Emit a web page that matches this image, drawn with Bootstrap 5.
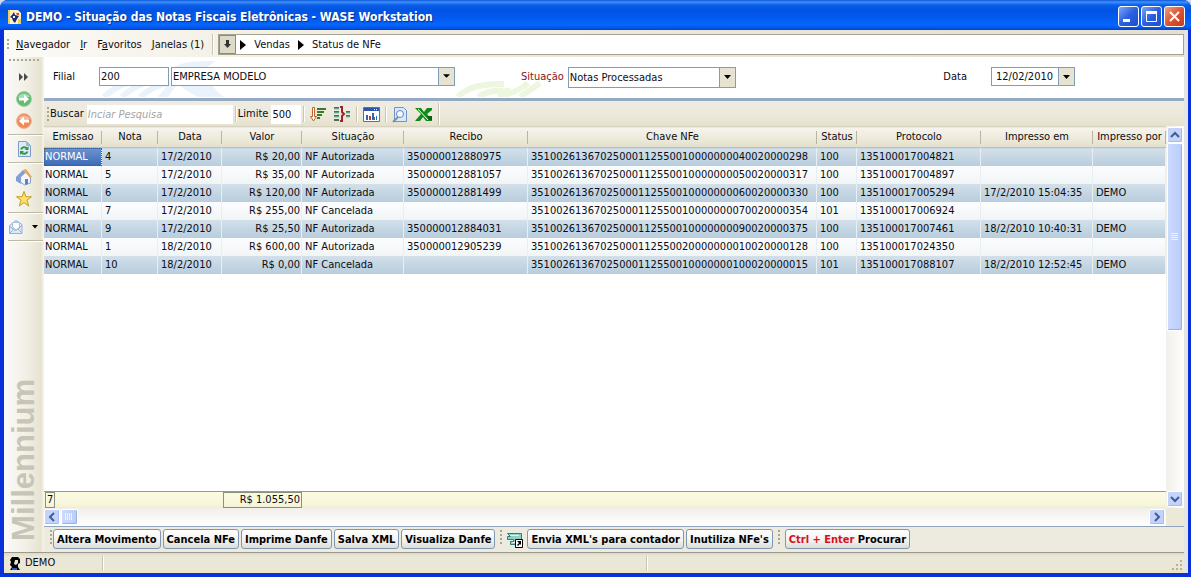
<!DOCTYPE html>
<html lang="pt-BR">
<head>
<meta charset="utf-8">
<meta name="viewport" content="width=device-width, initial-scale=1">
<title>DEMO - Situação das Notas Fiscais Eletrônicas - WASE Workstation</title>
<link href="https://cdn.jsdelivr.net/npm/bootstrap@5.3.0/dist/css/bootstrap.min.css" rel="stylesheet">
<style>
  :root { --tan: #ece9d8; --line: #7f9db9; --ink: #0c0c14; }
  body { font: 11px/14px "DejaVu Sans Condensed", "Noto Sans", sans-serif; color: var(--ink); background: #ccd9ee; }
  a { color: inherit; text-decoration: none; }
  button, input, select { font: inherit; color: inherit; }
  svg { display: block; flex: none; }
  .gap-2px { gap: 2px; }
  .fit { min-width: 0; }

  /* window frame */
  .win { border-radius: 8px 8px 0 0; background: #0831d9; overflow: hidden; }
  .titlebar { height: 30px; padding: 3px 6px 0 8px; background: linear-gradient(#0a54d8 0, #3f92fb 2px, #0b5fe8 5px, #0054e3 10px, #0459ef 18px, #0566fe 25px, #0355e8 28px, #0340c8 30px); }
  .titlebar h1 { font-size: 12px; line-height: 16px; font-weight: 700; color: #fff; text-shadow: 1px 1px 1px #0a2f8c; padding-left: 5px; }
  .cap { width: 21px; height: 21px; padding: 0; border: 1px solid #fff; border-radius: 3px; background: linear-gradient(135deg, #7fa5f8, #2a5fe0 50%, #1c4fd0); }
  .cap svg { width: 19px; height: 19px; }
  .cap-close { background: linear-gradient(135deg, #f0a088, #dd5433 50%, #c63a1a); }
  .inner { margin: 0 3px 4px 4px; background: var(--tan); border-right: 4px solid #e3e5e4; }

  /* menu and address */
  .menubar { height: 27px; padding: 4px 0 2px 2px; background: linear-gradient(90deg, #fbfaf5, #efecdf 30%, #e4e0cf); }
  .grip { width: 4px; background: radial-gradient(circle at 2px 2px, #a8a595 1px, transparent 1px) 0 0 / 4px 4px; }
  .grip-top { height: 4px; background: radial-gradient(circle at 2px 2px, #aaa797 1px, transparent 1px) 0 0 / 4px 4px; }
  .menubar nav { gap: 10px; padding-left: 6px; }
  .vline { width: 2px; border-left: 1px solid #c9c5b2; border-right: 1px solid #fff; }
  .path { height: 21px; border: 1px solid #a5a294; background: #fff; }
  .path button { width: 17px; height: 19px; padding: 0; border: 1px solid #8f8b78; background: #dfdac6; }

  /* side bar */
  .side { width: 40px; padding-top: 1px; background: linear-gradient(90deg, #fafafa, #f1efe4 60%, #e7e3d1 95%, #f4f1e6); border-right: 1px solid #f4f1e6; box-sizing: content-box; }
  .side button { height: 22px; padding: 0; border: 0; background: none; }
  .side .rule { height: 2px; margin: 2px 0 2px 4px; border-top: 1px solid #bdb9a6; border-bottom: 1px solid #fff; }
  .brand { writing-mode: vertical-rl; transform: rotate(180deg); font: 700 31px/31px "Liberation Sans", Arial, sans-serif; color: #c8c4b6; padding-top: 11px; }

  /* filters */
  .filters { height: 44px; background: #fff; border-bottom: 3px solid #96a9c2; padding: 10px 109px 0 9px; }
  .filters .art { position: absolute; left: 50px; top: 0; pointer-events: none; }
  .field { height: 19px; border: 1px solid var(--line); border-radius: 0; background: #fff; padding: 0 1px; outline: 0; }
  .combo { appearance: none; padding-right: 18px; background: #fff url("data:image/svg+xml,%3Csvg xmlns='http://www.w3.org/2000/svg' width='16' height='19'%3E%3Cpath fill='%23e6e3d2' d='M0 0h16v19H0z'/%3E%3Cpath fill='%237f9db9' d='M0 0h1v19H0z'/%3E%3Cpath d='M5 7h7L8.500 11z'/%3E%3C/svg%3E") right top / 16px 100% no-repeat; }
  .w-code { width: 70px; } .w-firm { width: 284px; } .w-status { width: 168px; } .w-date { width: 68px; }
  .tall { height: 21px; }
  .pick { width: 17px; height: 19px; padding: 0; margin-left: -1px; border: 1px solid var(--line); background: #e6e3d2; }
  .gap-firm { margin-left: 2px; } .gap-status { margin-left: 66px; }
  .lbl { line-height: 19px; } .lbl-red { color: #8b1010; }

  /* tool bar */
  .tools { height: 25px; padding: 2px 0 1px 2px; background: linear-gradient(#efece4, #ece8da 60%, #e6e1cc); }
  .tools input { height: 19px; border: 0; background: #fff; padding: 0 1px; outline: 0; }
  .tools input::placeholder { color: #a5a5a5; font-style: italic; opacity: 1; }
  .tools label { padding-right: 3px; }
  .w-find { width: 146px; } .w-limit { width: 30px; }
  .tools button { width: 24px; padding: 0; border: 0; background: none; }
  .tools .vline { margin: 0 1px 0 2px; }

  /* grid */
  .sheet { background: #fff; }
  .notes { table-layout: fixed; width: 100%; white-space: nowrap; border-collapse: collapse; }
  .notes th { height: 21px; padding: 0; font-weight: 400; text-align: center; border-bottom: 1px solid #c3bfae; border-top: 1px solid #d6d2c2;
    background: linear-gradient(#b9b5a4, #b9b5a4) right 4px / 1px 13px no-repeat, linear-gradient(#f6f4ec, #ece9da 60%, #e2decb); }
  .notes td { height: 18px; padding: 0 2px 0 3px; line-height: 17px; box-shadow: inset -1px 0 #e8eef2; }
  .notes td:first-child { padding-left: 1px; }
  .notes tr:nth-child(odd) td { background: linear-gradient(#d3e0ea, #c2d4e2 60%, #b9cddd); }
  .notes tr:nth-child(even) td { background: linear-gradient(#fbfcfd, #f2f5f6); }
  .notes tbody tr:first-child td:first-child { background: linear-gradient(#6b93cf, #3a68b4); color: #fff; outline: 1px dotted #6b5a20; outline-offset: -1px; }
  .c-em { width: 58px; } .c-no { width: 56px; } .c-da { width: 64px; } .c-va { width: 80px; } .c-si { width: 102px; } .c-re { width: 124px; }
  .c-st { width: 40px; } .c-pr { width: 124px; } .c-ie { width: 112px; } .c-ip { width: 73px; }
  .totals { height: 17px; padding-left: 1px; border-top: 1px solid #9a9a8a; background: linear-gradient(#fbfbe4, #f8f6d8 80%, #eeebd6); }
  .totals output { border: 1px solid #8f8f80; line-height: 14px; padding: 0 1px; }
  .t-count { width: 10px; } .t-sum { width: 79px; margin-left: 168px; text-align: right; }

  /* scroll bars */
  .vbar { width: 18px; padding: 1px 1px 1px 1px; background: linear-gradient(90deg, #f1f0ea, #fefefb); }
  .hbar { height: 18px; padding: 1px 1px 1px 0; background: linear-gradient(#f1efe8, #fff); }
  .corner { height: 18px; }
  .sb { width: 16px; height: 16px; padding: 0; border: 1px solid #fff; border-radius: 2px; background: #c3d3fb; box-shadow: inset -1px -1px #a5bbf0; }
  .thumb-v, .thumb-h { border: 1px solid #fff; border-radius: 2px; box-shadow: inset -1px -1px #98b1e4; background: linear-gradient(90deg, #cbdafe, #b9cdfa); }
  .thumb-v { height: 188px; }
  .thumb-h { width: 17px; height: 16px; margin-left: 1px; }

  /* actions and status */
  .actions { height: 26px; padding: 2px 2px 0 5px; border-top: 1px solid #8fa5bd; background: #edebe0; }
  .act { height: 20px; padding: 0 3px; border: 1px solid #7f97b3; border-radius: 3px; font-weight: 700; line-height: 17px; white-space: pre; background: linear-gradient(#fff, #f1f1ee 60%, #dcdcd8); color: #000; }
  .hot { color: #d8101c; }
  .status { height: 21px; border-top: 1px solid #9c998a; background: linear-gradient(#dedbca, #ebe8d8 4px, #ebe7d4 16px, #efe2bb 19px, #ece9d8); }
  .who { width: 98px; padding-left: 5px; } .room { width: 542px; }
</style>
</head>
<body>
<div class="win d-flex flex-column min-vh-100">
  <header class="titlebar d-flex align-items-center">
    <svg width="13" height="16" viewBox="0 0 13 16"><path fill="#fff3c0" d="M0 1h10l3 3v11H0z"/><path fill="#f1cf55" d="M0 1h2v14H0zM10 10h3v5h-3z"/><path fill="#1d2a78" d="M6 3l1 3 4 1-2 3-2 4-2-2-1-3-2-1 2-2z"/><path fill="#fff" d="M5 7h2v2H5z"/><path fill="#dd4a22" d="M8 4h3v2H9z"/></svg>
    <h1 class="m-0 flex-fill text-nowrap">DEMO - Situação das Notas Fiscais Eletrônicas - WASE Workstation</h1>
    <div class="d-flex gap-2px">
      <button class="cap" aria-label="Minimizar"><svg viewBox="0 0 19 19"><path fill="#fff" d="M4 12h7v3H4z"/></svg></button>
      <button class="cap" aria-label="Restaurar"><svg viewBox="0 0 19 19"><path fill="none" stroke="#fff" d="M4.500 5v9.500h10V5"/><path fill="#fff" d="M4 4h11v3H4z"/></svg></button>
      <button class="cap cap-close" aria-label="Fechar"><svg viewBox="0 0 19 19"><path stroke="#fff" stroke-width="2" d="M5 5l9 9M14 5l-9 9"/></svg></button>
    </div>
  </header>

  <div class="inner flex-fill d-flex flex-column">
    <div class="menubar d-flex">
      <div class="grip my-1"></div>
      <nav class="d-flex align-items-center text-nowrap me-2">
        <a href="#"><u>N</u>avegador</a><a href="#"><u>I</u>r</a><a href="#">F<u>a</u>voritos</a><a href="#"><u>J</u>anelas (1)</a>
      </nav>
      <div class="vline me-1"></div>
      <div class="path d-flex align-items-center flex-fill">
        <button aria-label="Histórico"><svg width="15" height="17" viewBox="0 0 15 17"><path fill="#333" d="M6 4h3v4h2l-3.500 4L4 8h2z"/></svg></button>
        <svg class="mx-1" width="6" height="10" viewBox="0 0 6 10"><path d="M0 0l6 5-6 5z"/></svg>
        <a class="ms-1" href="#">Vendas</a>
        <svg class="mx-2" width="6" height="10" viewBox="0 0 6 10"><path d="M0 0l6 5-6 5z"/></svg>
        <a href="#">Status de NFe</a>
      </div>
    </div>

    <div class="d-flex flex-fill">
      <aside class="side d-flex flex-column">
        <div class="grip-top mx-1 mb-1"></div>
        <button aria-label="Expandir"><svg class="mx-auto" width="10" height="8" viewBox="0 0 10 8"><path fill="#4a4a4a" d="M0 0l4 4-4 4zM5 0l4 4-4 4z"/></svg></button>
        <button aria-label="Avançar"><svg class="mx-auto" width="18" height="18" viewBox="0 0 18 18"><circle cx="9" cy="9" r="7.500" fill="#62bd70" stroke="#a5cfaa"/><path fill="#a5dcae" d="M3 7a7 7 0 0 1 12 0z"/><path fill="#fff" d="M4 7.500h5V4.500L14 9l-5 4.500v-3H4z"/></svg></button>
        <button aria-label="Voltar"><svg class="mx-auto" width="18" height="18" viewBox="0 0 18 18"><circle cx="9" cy="9" r="7.500" fill="#f08a5c" stroke="#ecb9a2"/><path fill="#f8b898" d="M3 7a7 7 0 0 1 12 0z"/><path fill="#fff" d="M14 7.500H9V4.500L4 9l5 4.500v-3h5z"/></svg></button>
        <div class="rule"></div>
        <button aria-label="Atualizar"><svg class="mx-auto" width="16" height="18" viewBox="0 0 16 18"><path fill="#dfeaf8" stroke="#7e9cc9" d="M2.500 1.500h8l4 4v11h-12z"/><path fill="#9ab8e4" d="M10 1l5 5h-5z"/><path fill="none" stroke="#2f9c3d" stroke-width="2" d="M5 9.500c1-2.500 4-3 6-1M11.500 11.500c-1 2.500-4 3-6 1"/><path fill="#2f9c3d" d="M12.500 6v4H9zM4 15v-4h4z"/></svg></button>
        <div class="rule"></div>
        <button aria-label="Início"><svg class="mx-auto" width="18" height="18" viewBox="0 0 18 18"><path fill="#7f9fd8" d="M1 9l7-7 2 2-4 12-5-3z"/><path fill="#f3f6fc" stroke="#8aa2cf" d="M5.500 9L11 4l4.500 5v6l-6 2-4-3z"/><path fill="#f0a352" d="M8 2l3-1 6 8-2 1-5-6z"/><path fill="#5f82c4" d="M10 11h3v5l-3 1z"/></svg></button>
        <button aria-label="Favoritos"><svg class="mx-auto" width="18" height="18" viewBox="0 0 18 18"><path fill="#ffe36a" stroke="#c99a22" d="M9 1.500l1.800 5.200 5.700.1-4.600 3.400 1.900 5.800L9 12.600 4.200 16l1.900-5.800L1.500 6.800l5.700-.1z"/></svg></button>
        <div class="rule"></div>
        <button class="d-flex align-items-center ps-1" aria-label="Mensagens"><svg width="16" height="16" viewBox="0 0 16 16"><path fill="#dce8f7" stroke="#93b2dc" d="M1.500 6.500L8 1.500l6 4v9h-12.500z"/><path fill="#fff" stroke="#a9c1e2" d="M4.500 3.500h7v6L8 11 4.500 8z"/><path fill="none" stroke="#93b2dc" d="M1.500 7.500l6 4 6.500-5M2 14l4-4M14 14l-4-4"/></svg><svg class="ms-2" width="6" height="4" viewBox="0 0 6 4"><path d="M0 0h6L3 3.500z"/></svg></button>
        <div class="rule"></div>
        <div class="brand mt-auto mx-1">Millennium</div>
      </aside>

      <main class="flex-fill d-flex flex-column fit">
        <form class="filters position-relative d-flex align-items-start">
          <svg class="art" width="450" height="40" viewBox="0 0 450 40"><g fill="none" stroke="#eaf3fb" stroke-width="6"><path d="M10 40Q24 26 50 22M28 40Q42 26 64 23M46 40Q60 28 76 26"/><path fill="#eaf3fb" stroke="none" d="M80 10Q90 3 122 4L112 11Q115 30 130 40H104Q85 30 84 26L74 40H64Q74 26 84 22z"/></g><g fill="none" stroke="#edf6de" stroke-width="6"><path d="M364 40Q376 26 410 27M384 40Q396 32 416 34M404 40Q426 34 434 26M426 40L446 26"/></g></svg>
          <label class="lbl position-relative" for="filial">Filial</label>
          <input class="field w-code ms-4 position-relative" id="filial" value="200">
          <select class="field combo w-firm gap-firm position-relative" aria-label="Empresa"><option>EMPRESA MODELO</option></select>
          <label class="lbl lbl-red gap-status position-relative" for="sit">Situação</label>
          <select class="field combo tall w-status ms-1 position-relative" id="sit"><option>Notas Processadas</option></select>
          <label class="lbl ms-auto me-4" for="data">Data</label>
          <input class="field w-date ps-1" id="data" value="12/02/2010"><button class="pick" type="button" aria-label="Calendário"><svg class="mx-auto" width="7" height="4" viewBox="0 0 7 4"><path d="M0 0h7L3.500 4z"/></svg></button>
        </form>

        <div class="tools d-flex align-items-center">
          <div class="grip h-75"></div>
          <label for="busca">Buscar</label><input class="w-find" id="busca" placeholder="Inciar Pesquisa">
          <div class="vline h-75"></div>
          <label for="lim">Limite</label><input class="w-limit" id="lim" value="500">
          <div class="vline h-75"></div>
          <button aria-label="Ordenar"><svg class="mx-auto" width="18" height="16" viewBox="0 0 18 16"><path fill="#fff" stroke="#c0622c" d="M3.500 1.500h2v9h2L4.500 15l-3-4.500h2z"/><path stroke="#3c7a28" stroke-width="2" d="M8 3h9M8 6h7M8 9h5M8 12h3"/></svg></button>
          <button aria-label="Agrupar"><svg class="mx-auto" width="18" height="16" viewBox="0 0 18 16"><path stroke="#44706c" stroke-width="2" d="M1 2h5M1 6h5M1 10h5M1 14h5M13 6h4M13 10h4"/><path stroke="#7fcf9c" d="M1 3h5M1 7h5M1 11h5M13 7h4M13 11h4"/><path fill="none" stroke="#a3232b" stroke-width="2" d="M7 1h2v5l2 2-2 2v5H7"/></svg></button>
          <div class="vline h-75"></div>
          <button aria-label="Gráfico"><svg class="mx-auto" width="17" height="15" viewBox="0 0 17 15"><path fill="#fff" stroke="#4a72bd" d="M.5.5h16v14H.5z"/><path fill="#2d55a8" d="M1 1h15v3H1z"/><path fill="#2d62c4" d="M3 8h2v5H3zM9 6h2v7H9zM13 9h1v4h-1z"/><path fill="#c43a3a" d="M6 9h2v4H6z"/><path fill="#2c8f4d" d="M11 10h1v3h-1z"/><path fill="#fff" d="M11 2h1v1h-1zM13 2h1v1h-1z"/></svg></button>
          <div class="vline h-75"></div>
          <button aria-label="Visualizar"><svg class="mx-auto" width="16" height="17" viewBox="0 0 16 17"><path fill="#d9e8fa" stroke="#6f93cf" d="M2.500 1.500h9l3 3v11h-12z"/><circle cx="8" cy="8" r="3.500" fill="#f3f9ff" stroke="#6588bd"/><path stroke="#7f8ea6" stroke-width="2" d="M6 11l-5 5"/></svg></button>
          <button aria-label="Excel"><svg class="mx-auto" width="18" height="15" viewBox="0 0 18 15"><path fill="#0d8a17" d="M0 1h6l3 4 3-4h5v2l-5 4 5 6v1h-6L8 10l-3 4H0l6-7z"/><path stroke="#fff" d="M3 2l10 11"/><path fill="#0d5f12" d="M12 9h5v4h-3z"/></svg></button>
          <div class="vline h-100"></div>
        </div>

        <div class="d-flex flex-fill">
          <div class="flex-fill d-flex flex-column fit">
            <div class="sheet flex-fill">
              <table class="notes">
                <colgroup><col class="c-em"><col class="c-no"><col class="c-da"><col class="c-va"><col class="c-si"><col class="c-re"><col><col class="c-st"><col class="c-pr"><col class="c-ie"><col class="c-ip"></colgroup>
                <thead><tr><th>Emissao</th><th>Nota</th><th>Data</th><th>Valor</th><th>Situação</th><th>Recibo</th><th>Chave NFe</th><th>Status</th><th>Protocolo</th><th>Impresso em</th><th>Impresso por</th></tr></thead>
                <tbody>
                  <tr><td>NORMAL</td><td>4</td><td>17/2/2010</td><td class="text-end">R$ 20,00</td><td>NF Autorizada</td><td>350000012880975</td><td>35100261367025000112550010000000040020000298</td><td>100</td><td>135100017004821</td><td></td><td></td></tr>
                  <tr><td>NORMAL</td><td>5</td><td>17/2/2010</td><td class="text-end">R$ 35,00</td><td>NF Autorizada</td><td>350000012881057</td><td>35100261367025000112550010000000050020000317</td><td>100</td><td>135100017004897</td><td></td><td></td></tr>
                  <tr><td>NORMAL</td><td>6</td><td>17/2/2010</td><td class="text-end">R$ 120,00</td><td>NF Autorizada</td><td>350000012881499</td><td>35100261367025000112550010000000060020000330</td><td>100</td><td>135100017005294</td><td>17/2/2010 15:04:35</td><td>DEMO</td></tr>
                  <tr><td>NORMAL</td><td>7</td><td>17/2/2010</td><td class="text-end">R$ 255,00</td><td>NF Cancelada</td><td></td><td>35100261367025000112550010000000070020000354</td><td>101</td><td>135100017006924</td><td></td><td></td></tr>
                  <tr><td>NORMAL</td><td>9</td><td>17/2/2010</td><td class="text-end">R$ 25,50</td><td>NF Autorizada</td><td>350000012884031</td><td>35100261367025000112550010000000090020000375</td><td>100</td><td>135100017007461</td><td>18/2/2010 10:40:31</td><td>DEMO</td></tr>
                  <tr><td>NORMAL</td><td>1</td><td>18/2/2010</td><td class="text-end">R$ 600,00</td><td>NF Autorizada</td><td>350000012905239</td><td>35100261367025000112550020000000010020000128</td><td>100</td><td>135100017024350</td><td></td><td></td></tr>
                  <tr><td>NORMAL</td><td>10</td><td>18/2/2010</td><td class="text-end">R$ 0,00</td><td>NF Cancelada</td><td></td><td>35100261367025000112550010000000100020000015</td><td>101</td><td>135100017088107</td><td>18/2/2010 12:52:45</td><td>DEMO</td></tr>
                </tbody>
              </table>
            </div>
            <div class="totals d-flex align-items-end"><output class="t-count">7</output><output class="t-sum">R$ 1.055,50</output></div>
            <div class="hbar d-flex">
              <button class="sb" aria-label="Rolar para a esquerda"><svg width="14" height="14" viewBox="0 0 14 14"><path fill="none" stroke="#3f5d94" stroke-width="2" d="M9 3L5 7l4 4"/></svg></button>
              <div class="thumb-h"><svg width="15" height="14" viewBox="0 0 15 14"><path stroke="#eef4ff" d="M3.500 3v7M5.500 3v7M7.500 3v7M9.500 3v7"/></svg></div>
              <button class="sb ms-auto" aria-label="Rolar para a direita"><svg width="14" height="14" viewBox="0 0 14 14"><path fill="none" stroke="#3f5d94" stroke-width="2" d="M5 3l4 4-4 4"/></svg></button>
            </div>
          </div>
          <div class="d-flex flex-column">
            <div class="vbar flex-fill d-flex flex-column">
              <button class="sb" aria-label="Rolar para cima"><svg width="14" height="14" viewBox="0 0 14 14"><path fill="none" stroke="#3f5d94" stroke-width="2" d="M3 9l4-4 4 4"/></svg></button>
              <div class="thumb-v d-flex align-items-center"><svg class="mx-auto" width="8" height="8" viewBox="0 0 8 8"><path stroke="#eef4ff" d="M0 .5h7M0 2.500h7M0 4.500h7M0 6.500h7"/></svg></div>
              <button class="sb mt-auto" aria-label="Rolar para baixo"><svg width="14" height="14" viewBox="0 0 14 14"><path fill="none" stroke="#3f5d94" stroke-width="2" d="M3 5l4 4 4-4"/></svg></button>
            </div>
            <div class="corner"></div>
          </div>
        </div>

        <div class="actions d-flex">
          <div class="grip h-75"></div>
          <div class="d-flex align-items-start gap-2px">
            <button class="act">Altera Movimento</button><button class="act">Cancela NFe</button><button class="act">Imprime Danfe</button><button class="act">Salva XML</button><button class="act">Visualiza Danfe</button>
          </div>
          <div class="grip h-75 mx-1"></div>
          <svg class="mt-1 me-1" width="16" height="16" viewBox="0 0 16 16"><path fill="#8fd0c4" stroke="#2f8177" d="M.5.5h14v7h-4v4h-7v-3h3v-2h-6v-3h3z"/><path stroke="#d9f3ee" d="M3 2.500h9M5 9.500h4"/><path fill="#fff" stroke="#000" d="M8.500 6.500h7v8h-7z"/><path fill="#000" d="M10 8h4v4l-1-1-2 2-1-1 2-2z"/></svg>
          <div class="d-flex align-items-start gap-2px">
            <button class="act">Envia XML's para contador</button><button class="act">Inutiliza NFe's</button>
          </div>
          <div class="grip h-75 mx-1"></div>
          <button class="act"><span class="hot">Ctrl + Enter</span> Procurar</button>
        </div>
      </main>
    </div>

    <footer class="status d-flex align-items-center">
      <div class="who d-flex align-items-center"><svg class="me-1" width="12" height="14" viewBox="0 0 12 14"><path d="M3 1h6l2 2v4L9 8v3l2 3H1l2-3-2-2 1-3-1-2z"/><path fill="#e9e4d6" d="M6 4h3v3l-2 2-2-1z"/><path fill="#3a4fc0" d="M3 12h5v2H3z"/></svg>DEMO</div>
      <div class="vline h-75"></div><div class="room"></div><div class="vline h-75"></div>
      <svg class="ms-auto mt-auto" width="14" height="14" viewBox="0 0 14 14"><path fill="#b5b19d" d="M10 1h2v2h-2zM6 5h2v2H6zM10 5h2v2h-2zM2 9h2v2H2zM6 9h2v2H6zM10 9h2v2h-2z"/></svg>
    </footer>
  </div>
</div>
<script src="https://cdn.jsdelivr.net/npm/bootstrap@5.3.0/dist/js/bootstrap.bundle.min.js"></script>
</body>
</html>
